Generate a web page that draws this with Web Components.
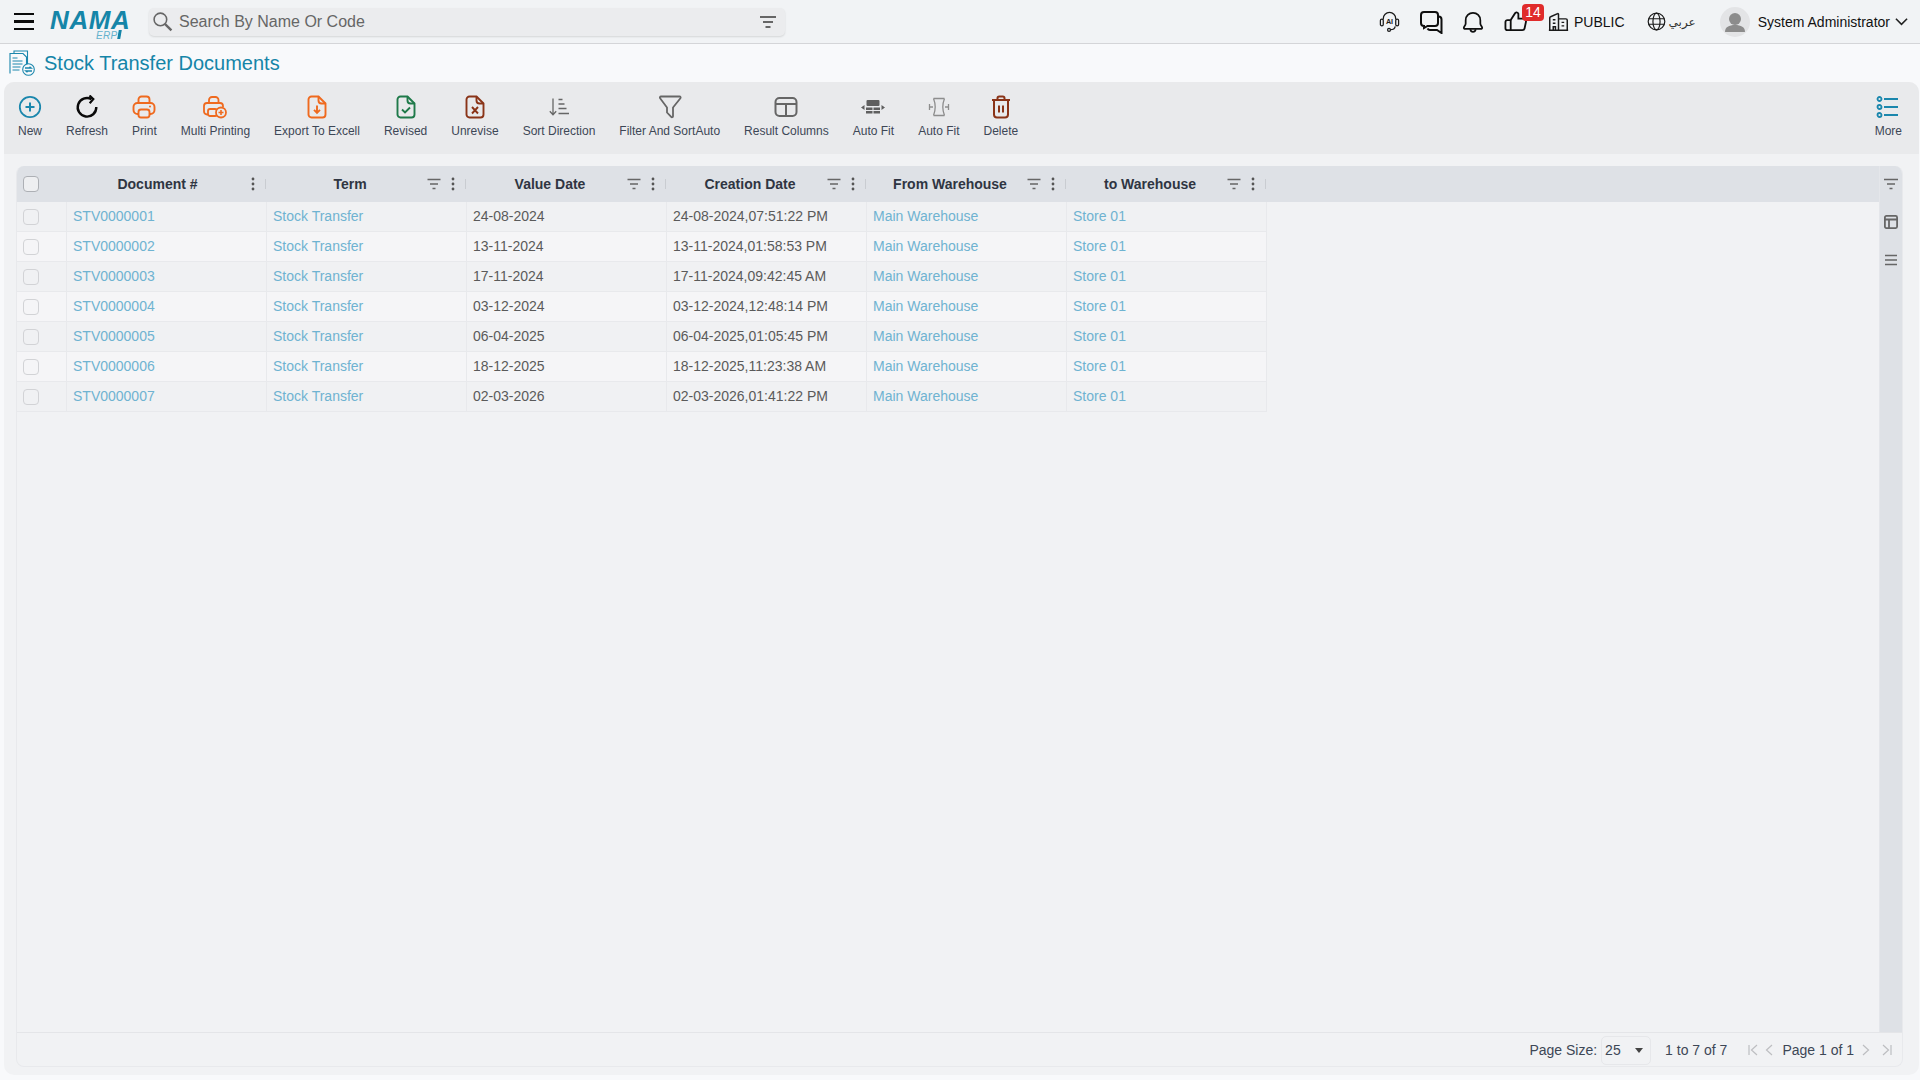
<!DOCTYPE html>
<html lang="en">
<head>
<meta charset="utf-8">
<title>Stock Transfer Documents</title>
<style>
    html, body { margin: 0; height: 100%; }
    body {
        height: 1080px;
        overflow: hidden;
        display: flex;
        flex-direction: column;
        background: #f8f9fb;
        font-family: "Liberation Sans", Arial, "DejaVu Sans", sans-serif;
        font-size: 14px;
        color: #333;
    }
</style>
</head>
<body>
<erp-topbar></erp-topbar>
<erp-title>Stock Transfer Documents</erp-title>
<erp-panel>
    <erp-toolbar slot="toolbar">
        <erp-tool label="New"><svg viewBox="0 0 24 24" fill="none" stroke="#1b87ad" stroke-width="1.8"><circle cx="12" cy="12" r="10.2"/><path d="M12 7.5v9M7.5 12h9" stroke-width="2"/></svg></erp-tool>
        <erp-tool label="Refresh"><svg viewBox="0 0 24 24" fill="none" stroke="#0a0a0a" stroke-width="2.4"><path d="M16.5 4.2A9.3 9.3 0 1 0 21.3 12"/><path d="M14.5 0.5l3.8 3.6-3.6 4.2" stroke-width="2.2"/></svg></erp-tool>
        <erp-tool label="Print"><svg viewBox="0 0 24 24" fill="none" stroke="#ef6a1f" stroke-width="1.9"><path d="M6.5 9V4.5a3 3 0 0 1 3-3h5a3 3 0 0 1 3 3V9"/><rect x="1.5" y="8" width="21" height="11" rx="4"/><rect x="6.5" y="14.5" width="11" height="8" rx="2.5" fill="#e9eaec"/><circle cx="18" cy="11.5" r="1" fill="#ef6a1f" stroke="none"/></svg></erp-tool>
        <erp-tool label="Multi Printing"><svg viewBox="0 0 24 24" fill="none" stroke="#ef6a1f" stroke-width="1.8"><path d="M6 8V5a3 3 0 0 1 3-3h3.500a3 3 0 0 1 3 3v3"/><path d="M5 19.500H4a3 3 0 0 1-3-3V11a3 3 0 0 1 3-3h13a3 3 0 0 1 3 3v1"/><rect x="5" y="14" width="9" height="7" rx="2"/><circle cx="18" cy="17.500" r="5" fill="#e9eaec"/><path d="M18 15v5M15.500 17.500h5" stroke-width="1.600"/></svg></erp-tool>
        <erp-tool label="Export To Excell"><svg viewBox="0 0 24 24" fill="none" stroke="#ef6a1f" stroke-width="1.9"><path d="M6.500 1.500h7l7 7v11a3 3 0 0 1-3 3h-11a3 3 0 0 1-3-3v-15a3 3 0 0 1 3-3z"/><path d="M13.500 1.500v4a3 3 0 0 0 3 3h4"/><path d="M12 10.500v7M9 14.800l3 3 3-3" stroke-width="1.900"/></svg></erp-tool>
        <erp-tool label="Revised"><svg viewBox="0 0 24 24" fill="none" stroke="#1f7a4a" stroke-width="1.900"><path d="M6.500 1.500h7l7 7v11a3 3 0 0 1-3 3h-11a3 3 0 0 1-3-3v-15a3 3 0 0 1 3-3z"/><path d="M13.500 1.500v4a3 3 0 0 0 3 3h4"/><path d="M8 14.500l3 3 5-5" stroke-width="1.900"/></svg></erp-tool>
        <erp-tool label="Unrevise"><svg viewBox="0 0 24 24" fill="none" stroke="#8a3418" stroke-width="1.900"><path d="M6.500 1.500h7l7 7v11a3 3 0 0 1-3 3h-11a3 3 0 0 1-3-3v-15a3 3 0 0 1 3-3z"/><path d="M13.500 1.500v4a3 3 0 0 0 3 3h4"/><path d="M9 12l6 6.500M15 12l-6 6.500" stroke-width="1.900"/></svg></erp-tool>
        <erp-tool label="Sort Direction"><svg viewBox="0 0 24 24" fill="none" stroke="#666" stroke-width="1.300"><path d="M6 3.500v16M2.800 16.300l3.200 3.500 3.200-3.500"/><path d="M11.500 4.500h4M11.500 9h6M11.500 13.500h8M11.500 18.500h10.500"/></svg></erp-tool>
        <erp-tool label="Filter And SortAuto"><svg viewBox="0 0 24 24" fill="none" stroke="#666" stroke-width="1.800"><path d="M3 1.500h18.500c1 0 1.500 1 .9 1.800L15 12.500v8.800c0 1-1.200 1.300-1.800.6L9 17.500v-5L2.100 3.300C1.500 2.500 2 1.500 3 1.500z"/></svg></erp-tool>
        <erp-tool label="Result Columns"><svg viewBox="0 0 24 24" fill="none" stroke="#666" stroke-width="2"><rect x="1.500" y="3" width="21" height="18" rx="4"/><path d="M1.500 9h21M12 9v12"/></svg></erp-tool>
        <erp-tool label="Auto Fit"><svg viewBox="0 0 24 24" fill="#5f5f5f" stroke="none"><rect x="5.500" y="5" width="13" height="6" rx="1"/><rect x="5" y="12.500" width="6.500" height="2.500"/><rect x="12.500" y="12.500" width="6.500" height="2.500"/><rect x="5" y="16" width="6.500" height="2.500"/><rect x="12.500" y="16" width="6.500" height="2.500"/><path d="M0 12.500l3.500-2.500v5zM24 12.500l-3.500-2.500v5z"/></svg></erp-tool>
        <erp-tool label="Auto Fit"><svg viewBox="0 0 24 24" fill="none" stroke="#8d8d8d" stroke-width="1.300"><path d="M6.500 3.500c2 5 2 12 0 17M17.500 3.500c-2 5-2 12 0 17M6.500 3.500h11M6.500 20.500h11"/><path d="M2.500 9v6M21.500 9v6"/><path d="M3 12h3M18 12h3" stroke-width="1.500"/></svg></erp-tool>
        <erp-tool label="Delete"><svg viewBox="0 0 24 24" fill="none" stroke="#8a3418" stroke-width="2"><path d="M3 5h18"/><path d="M8.500 4.500V3.200C8.500 2 9.200 1.500 10.200 1.500h3.600c1 0 1.700.5 1.700 1.700v1.300"/><path d="M5 5v14.500a3 3 0 0 0 3 3h8a3 3 0 0 0 3-3V5"/><path d="M10 10.500v7M14 10.500v7"/></svg></erp-tool>
        <erp-tool label="More" class="end"><svg viewBox="0 0 24 24" fill="none" stroke="#1b87ad" stroke-width="1.800"><circle cx="3.500" cy="4" r="2"/><circle cx="3.500" cy="12" r="2"/><circle cx="3.500" cy="20" r="2"/><path d="M8 4h14M8 12h14M8 20h14"/></svg></erp-tool>
    </erp-toolbar>
    <erp-grid slot="grid"></erp-grid>
</erp-panel>

<script>
// small svg set shared by the bars
const ICONS = {
    filter: '<svg viewBox="0 0 16 16" width="16" height="16" fill="none" stroke="#666" stroke-width="1.500"><path d="M1.500 3.500h13M4 8h8M6.500 12.500h3"/></svg>',
    kebab: '<svg viewBox="0 0 16 16" width="16" height="16" fill="#555"><circle cx="8" cy="3" r="1.400"/><circle cx="8" cy="8" r="1.400"/><circle cx="8" cy="13" r="1.400"/></svg>'
};

class ErpTopbar extends HTMLElement {
    constructor() {
        super();
        this.attachShadow({ mode: 'open' });
    }

    connectedCallback() {
        this.shadowRoot.innerHTML = `
            <style>
                :host {
                    display: flex;
                    align-items: center;
                    height: 43px;
                    flex: none;
                    background: #f1f3f5;
                    border-bottom: 1px solid #d4d5d8;
                    color: #111;
                }
                svg { display: block; flex: none; }
                .burger { margin-left: 14px; width: 20px; display: flex; flex-direction: column; gap: 5px; }
                .burger i { display: block; height: 2.500px; background: #0b0b0b; }
                .logo { position: relative; margin-left: 16px; width: 82px; height: 36px; flex: none; color: #1585a8; }
                .logo b { position: absolute; left: 0; top: 5px; font: italic bold 26px/22px "Liberation Sans", sans-serif; letter-spacing: .6px; }
                .logo span { position: absolute; left: 46px; top: 27px; font: italic 10px/10px "Liberation Sans", sans-serif; color: #65b2cd; letter-spacing: .3px; }
                .logo i { position: absolute; left: 68px; top: 26px; width: 3px; height: 9px; background: #1585a8; transform: skewX(-10deg); }
                .search {
                    margin-left: 17px;
                    width: 636px;
                    height: 28px;
                    box-sizing: border-box;
                    flex: none;
                    display: flex;
                    align-items: center;
                    padding: 0 9px 0 3px;
                    background: #ebecee;
                    border-radius: 5px;
                    box-shadow: 0 1px 2px rgba(0,0,0,.12);
                    font-size: 16px;
                    color: #666;
                }
                .search span { margin-left: 6px; flex: 1; }
                .right { margin-left: auto; display: flex; align-items: center; height: 100%; font-size: 14px; padding-right: 12px; }
                .bell { position: relative; }
                .badge {
                    position: absolute;
                    left: 18px;
                    top: -6px;
                    width: 22px;
                    height: 17px;
                    border-radius: 4px;
                    background: #e02b2b;
                    color: #fff;
                    font-size: 14px;
                    line-height: 17px;
                    text-align: center;
                }
                .ar { font: 12px "DejaVu Sans", sans-serif; color: #333; margin-left: 3px; }
                .avatar {
                    width: 30px;
                    height: 30px;
                    border-radius: 50%;
                    background: #e3e4e6;
                    overflow: hidden;
                    flex: none;
                }
            </style>
            <div class="burger"><i></i><i></i><i></i></div>
            <div class="logo"><b>NAMA</b><span>ERP</span><i></i></div>
            <div class="search">
                <svg viewBox="0 0 20 20" width="21" height="21" fill="none" stroke="#666" stroke-width="1.500"><circle cx="8" cy="8" r="6"/><path d="M12.500 12.500L18.500 18.500" stroke-width="2.200"/></svg>
                <span>Search By Name Or Code</span>
                <svg viewBox="0 0 16 16" width="16" height="16" fill="none" stroke="#666" stroke-width="1.800"><path d="M0 3h16M3 8h10M5.500 13h5"/></svg>
            </div>
            <div class="right">
                <svg viewBox="0 0 24 24" width="23" height="23" fill="none" stroke="#1a1a1a" stroke-width="1.300" style="margin-right:18px"><path d="M5.500 10V9a6.500 6.500 0 0 1 13 0v1"/><rect x="2.500" y="9.500" width="3" height="7" rx="1.500"/><rect x="18.500" y="9.500" width="3" height="7" rx="1.500"/><path d="M18 17c-.5 2.500-2.500 3.500-5 3.500"/><circle cx="11.500" cy="20.800" r="1.500"/><text x="12" y="14.500" text-anchor="middle" font-family="Liberation Sans, sans-serif" font-size="7.500" font-weight="700" fill="#1a1a1a" stroke="none">AI</text></svg>
                <svg viewBox="0 0 24 24" width="24" height="24" fill="none" stroke="#0f0f0f" stroke-width="2" style="margin-right:19px"><path d="M5 2h11a3 3 0 0 1 3 3v8a3 3 0 0 1-3 3H8.500L5 18v-2a3 3 0 0 1-3-3V5a3 3 0 0 1 3-3z"/><path d="M19 6.500h.500a3 3 0 0 1 3 3V23l-4.500-3H11a3 3 0 0 1-2.500-1.500"/></svg>
                <svg viewBox="0 0 24 24" width="22" height="24" fill="none" stroke="#0f0f0f" stroke-width="1.900" style="margin-right:20px"><path d="M12 2a8 8 0 0 0-8 8v3.500c0 2-1.500 3-2 4.500-.3 1 .5 1.500 1.500 1.500h17c1 0 1.800-.5 1.500-1.500-.5-1.500-2-2.500-2-4.500V10a8 8 0 0 0-8-8z"/><path d="M9 20c.5 2 1.500 2.800 3 2.800s2.500-.8 3-2.800"/></svg>
                <div class="bell" style="margin-right:4px">
                    <svg viewBox="0 0 24 24" width="23" height="23" fill="none" stroke="#0f0f0f" stroke-width="1.900"><path d="M7 10.500H3.500a2 2 0 0 0-2 2v6.500a2 2 0 0 0 2 2H7z"/><path d="M7 10.500l4.500-7c.5-1.500 3-1.500 3.500.5v5h5a3 3 0 0 1 3 3l-1.500 7a2.500 2.500 0 0 1-2.500 2H7"/></svg>
                    <div class="badge">14</div>
                </div>
                <svg viewBox="0 0 24 24" width="21" height="21" fill="none" stroke="#1a1a1a" stroke-width="1.700" style="margin-right:5px;margin-left:17px"><path d="M2 22V8a1.500 1.500 0 0 1 1-1.500L11 3c.6-.3 1 .2 1 .8V22M12 9h8.500a1.500 1.500 0 0 1 1.500 1.500V22M1 22h22M5.500 10h3M5.500 14h3M15.500 13h3M15.500 17h3M6 22v-4h2.500v4" /></svg>
                <span>PUBLIC</span>
                <svg viewBox="0 0 24 24" width="19" height="19" fill="none" stroke="#1a1a1a" stroke-width="1.500" style="margin-left:22px"><circle cx="12" cy="12" r="10.500"/><ellipse cx="12" cy="12" rx="4.500" ry="10.500"/><path d="M2 8.500h20M2 15.500h20"/></svg>
                <span class="ar">عربي</span>
                <div class="avatar" style="margin-left:24px"><svg viewBox="0 0 30 30" width="30" height="30" fill="#8c8c8c"><circle cx="15" cy="12" r="6"/><path d="M5 25c0-5 4-7 10-7s10 2 10 7z"/></svg></div>
                <span style="margin-left:8px">System Administrator</span>
                <svg viewBox="0 0 14 14" width="13" height="13" fill="none" stroke="#222" stroke-width="1.700" style="margin-left:5px"><path d="M1 4l6 6 6-6"/></svg>
            </div>
        `;
    }
}

class ErpTitle extends HTMLElement {
    constructor() {
        super();
        this.attachShadow({ mode: 'open' });
    }

    connectedCallback() {
        this.shadowRoot.innerHTML = `
            <style>
                :host {
                    display: flex;
                    align-items: center;
                    flex: none;
                    height: 38px;
                    padding-left: 9px;
                    gap: 9px;
                    font-size: 20px;
                    color: #1585a8;
                }
            </style>
            <svg viewBox="0 0 26 26" width="26" height="26" fill="none" stroke="#1b87ad" stroke-width="1.100">
                <path d="M5 3.500V1h13.500v14"/>
                <path d="M1 23.500V3.500h13l3.500 3.500v9"/>
                <path d="M3.500 8h5M3.500 11h10M3.500 14h10M3.500 17h8M3.500 20h7"/>
                <circle cx="19.500" cy="19.500" r="5.800" fill="#f8f9fb"/>
                <path d="M16 18h6l-1.500-1.300M23 21h-6l1.500 1.300" stroke-width="1.500"/>
            </svg>
            <slot></slot>
        `;
    }
}

class ErpPanel extends HTMLElement {
    constructor() {
        super();
        this.attachShadow({ mode: 'open' });
    }

    connectedCallback() {
        this.shadowRoot.innerHTML = `
            <style>
                :host {
                    display: flex;
                    flex-direction: column;
                    flex: 1;
                    min-height: 0;
                    margin: 0 1px 5px 4px;
                    background: #f1f2f4;
                    border-radius: 10px;
                    overflow: hidden;
                }
                .body {
                    flex: 1;
                    min-height: 0;
                    display: flex;
                    padding: 12px 16px 8px 12px;
                }
            </style>
            <slot name="toolbar"></slot>
            <div class="body"><slot name="grid"></slot></div>
        `;
    }
}

class ErpToolbar extends HTMLElement {
    constructor() {
        super();
        this.attachShadow({ mode: 'open' });
    }

    connectedCallback() {
        this.shadowRoot.innerHTML = `
            <style>
                :host {
                    display: flex;
                    flex: none;
                    height: 72px;
                    box-sizing: border-box;
                    padding: 13px 5px 0 2px;
                    background: #e9eaec;
                }
                ::slotted(.end) { margin-left: auto; }
            </style>
            <slot></slot>
        `;
    }
}

class ErpTool extends HTMLElement {
    constructor() {
        super();
        this.attachShadow({ mode: 'open' });
    }

    connectedCallback() {
        this.shadowRoot.innerHTML = `
            <style>
                :host {
                    display: flex;
                    flex-direction: column;
                    align-items: center;
                    padding: 0 12px;
                    font-size: 12px;
                    color: #3d4756;
                    white-space: nowrap;
                }
                ::slotted(svg) { display: block; width: 24px; height: 24px; }
                .label { margin-top: 5px; line-height: 14px; }
            </style>
            <slot></slot>
            <div class="label">${this.getAttribute('label')}</div>
        `;
    }
}

class ErpCheck extends HTMLElement {
    constructor() {
        super();
        this.attachShadow({ mode: 'open' });
    }

    connectedCallback() {
        this.shadowRoot.innerHTML = `
            <style>
                :host {
                    display: block;
                    width: 16px;
                    height: 16px;
                    box-sizing: border-box;
                    border: 1px solid var(--check-border, #d2d3d6);
                    border-radius: 4px;
                    background: var(--check-bg, transparent);
                }
            </style>
        `;
    }
}

class ErpHeadCell extends HTMLElement {
    constructor() {
        super();
        this.attachShadow({ mode: 'open' });
    }

    connectedCallback() {
        const hasFilter = this.hasAttribute('filter');
        this.shadowRoot.innerHTML = `
            <style>
                :host {
                    display: flex;
                    align-items: center;
                    width: 200px;
                    height: 100%;
                    padding-right: 5px;
                    box-sizing: border-box;
                    position: relative;
                }
                .label {
                    flex: 1;
                    text-align: center;
                    font-weight: 700;
                    font-size: 14px;
                    color: #2f3542;
                    padding-left: ${hasFilter ? 8 : 7}px;
                }
                svg { display: block; flex: none; }
                .kebab { margin-left: 3px; }
                .sep { position: absolute; right: 0; top: 13px; height: 10px; width: 1px; background: #c9ccd1; }
            </style>
            <div class="label">${this.getAttribute('label')}</div>
            ${hasFilter ? ICONS.filter : ''}
            <span class="kebab">${ICONS.kebab}</span>
            <div class="sep"></div>
        `;
    }
}

class ErpGridRow extends HTMLElement {
    constructor() {
        super();
        this.attachShadow({ mode: 'open' });
    }

    connectedCallback() {
        const cols = JSON.parse(this.getAttribute('cells'));
        const cells = cols.map((c) =>
            `<div class="cell${c.link ? ' link' : ''}">${c.text}</div>`).join('');
        this.shadowRoot.innerHTML = `
            <style>
                :host {
                    display: flex;
                    width: 1250px;
                    height: 30px;
                    box-sizing: border-box;
                    border-bottom: 1px solid #e8e9ec;
                    border-right: 1px solid #e8e9ec;
                    background: var(--row-bg, #f1f2f4);
                    font-size: 14px;
                    line-height: 29px;
                    color: #5a5a5a;
                }
                .chk { width: 49px; flex: none; display: flex; align-items: center; padding-left: 6px; box-sizing: border-box; }
                .cell { width: 200px; flex: none; box-sizing: border-box; padding-left: 6px; border-left: 1px solid #e8e9ec; white-space: nowrap; }
                .link { color: #6fb3d1; }
            </style>
            <div class="chk"><erp-check></erp-check></div>
            ${cells}
        `;
    }
}

class ErpPager extends HTMLElement {
    constructor() {
        super();
        this.attachShadow({ mode: 'open' });
    }

    connectedCallback() {
        this.shadowRoot.innerHTML = `
            <style>
                :host {
                    display: flex;
                    align-items: center;
                    justify-content: flex-end;
                    flex: none;
                    height: 34px;
                    box-sizing: border-box;
                    padding: 1px 9px 0 0;
                    border-top: 1px solid #e4e5e8;
                    font-size: 14px;
                    color: #3d4756;
                    white-space: nowrap;
                }
                .select {
                    display: flex;
                    align-items: center;
                    justify-content: space-between;
                    width: 50px;
                    height: 29px;
                    box-sizing: border-box;
                    margin-left: 4px;
                    padding: 0 7px 0 3px;
                    border: 1px solid #e6e7ea;
                    border-radius: 5px;
                }
                .select i { width: 0; height: 0; border: 4.500px solid transparent; border-top: 5.500px solid #444; border-bottom: 0; }
                svg { display: block; flex: none; }
            </style>
            <span>Page Size:</span>
            <div class="select"><span>25</span><i></i></div>
            <span style="margin-left:14px">1 to 7 of 7</span>
            <svg viewBox="0 0 12 12" width="12" height="12" fill="none" stroke="#bdbec1" stroke-width="1.200" style="margin-left:20px"><path d="M2 1v10M10 1L4.500 6l5.500 5"/></svg>
            <svg viewBox="0 0 12 12" width="12" height="12" fill="none" stroke="#bdbec1" stroke-width="1.200" style="margin-left:4px"><path d="M9 1L3.500 6 9 11"/></svg>
            <span style="margin-left:7px">Page 1 of 1</span>
            <svg viewBox="0 0 12 12" width="12" height="12" fill="none" stroke="#bdbec1" stroke-width="1.200" style="margin-left:6px"><path d="M3 1l5.500 5L3 11"/></svg>
            <svg viewBox="0 0 12 12" width="12" height="12" fill="none" stroke="#bdbec1" stroke-width="1.200" style="margin-left:9px"><path d="M2 1l5.500 5L2 11M10 1v10"/></svg>
        `;
    }
}

class ErpGrid extends HTMLElement {
    constructor() {
        super();
        this.attachShadow({ mode: 'open' });
    }

    connectedCallback() {
        const rows = [
            ['STV0000001', '24-08-2024', '24-08-2024,07:51:22 PM'],
            ['STV0000002', '13-11-2024', '13-11-2024,01:58:53 PM'],
            ['STV0000003', '17-11-2024', '17-11-2024,09:42:45 AM'],
            ['STV0000004', '03-12-2024', '03-12-2024,12:48:14 PM'],
            ['STV0000005', '06-04-2025', '06-04-2025,01:05:45 PM'],
            ['STV0000006', '18-12-2025', '18-12-2025,11:23:38 AM'],
            ['STV0000007', '02-03-2026', '02-03-2026,01:41:22 PM']
        ];
        const rowHtml = rows.map((r, i) => {
            const cells = [
                { text: r[0], link: true },
                { text: 'Stock Transfer', link: true },
                { text: r[1] },
                { text: r[2] },
                { text: 'Main Warehouse', link: true },
                { text: 'Store 01', link: true }
            ];
            const bg = i % 2 ? '#f5f5f7' : '#f0f1f3';
            return `<erp-grid-row style="--row-bg:${bg}" cells='${JSON.stringify(cells)}'></erp-grid-row>`;
        }).join('');

        this.shadowRoot.innerHTML = `
            <style>
                :host {
                    display: flex;
                    flex-direction: column;
                    flex: 1;
                    min-width: 0;
                    border-radius: 8px;
                    border: 1px solid #e8e9ec;
                    border-top: 0;
                    box-sizing: border-box;
                    overflow: hidden;
                    height: 901px;
                }
                .top { flex: 1; min-height: 0; display: flex; }
                .main { flex: 1; min-width: 0; }
                .head {
                    display: flex;
                    height: 36px;
                    align-items: center;
                    background: #dee1e6;
                }
                .head .chk { width: 49px; flex: none; padding-left: 6px; box-sizing: border-box; --check-border: #adb0b5; --check-bg: #eeeff1; }
                .side {
                    width: 23px;
                    flex: none;
                    background: #dee1e6;
                    border-left: 1px solid #e4e6ea;
                    box-sizing: border-box;
                    display: flex;
                    flex-direction: column;
                    align-items: center;
                    padding-top: 11px;
                    gap: 23px;
                }
                .side svg { display: block; }
            </style>
            <div class="top">
                <div class="main">
                    <div class="head">
                        <div class="chk"><erp-check></erp-check></div>
                        <erp-head-cell label="Document #"></erp-head-cell>
                        <erp-head-cell label="Term" filter></erp-head-cell>
                        <erp-head-cell label="Value Date" filter></erp-head-cell>
                        <erp-head-cell label="Creation Date" filter></erp-head-cell>
                        <erp-head-cell label="From Warehouse" filter></erp-head-cell>
                        <erp-head-cell label="to Warehouse" filter></erp-head-cell>
                    </div>
                    ${rowHtml}
                </div>
                <div class="side">
                    <svg viewBox="0 0 14 14" width="14" height="14" fill="none" stroke="#666" stroke-width="1.600"><path d="M0 2.500h14M3 7h8M5.500 11.500h3"/></svg>
                    <svg viewBox="0 0 14 14" width="14" height="16" fill="none" stroke="#666" stroke-width="1.800"><rect x=".9" y=".9" width="12.200" height="12.200" rx="1.500"/><path d="M.9 4.500h12.200M5 4.500v8.600"/></svg>
                    <svg viewBox="0 0 14 14" width="14" height="14" fill="none" stroke="#666" stroke-width="1.500"><path d="M1 2.500h12M1 7h12M1 11.500h12"/></svg>
                </div>
            </div>
            <erp-pager></erp-pager>
        `;
    }
}

customElements.define('erp-check', ErpCheck);
customElements.define('erp-head-cell', ErpHeadCell);
customElements.define('erp-grid-row', ErpGridRow);
customElements.define('erp-pager', ErpPager);
customElements.define('erp-grid', ErpGrid);
customElements.define('erp-tool', ErpTool);
customElements.define('erp-toolbar', ErpToolbar);
customElements.define('erp-panel', ErpPanel);
customElements.define('erp-title', ErpTitle);
customElements.define('erp-topbar', ErpTopbar);
</script>
</body>
</html>
